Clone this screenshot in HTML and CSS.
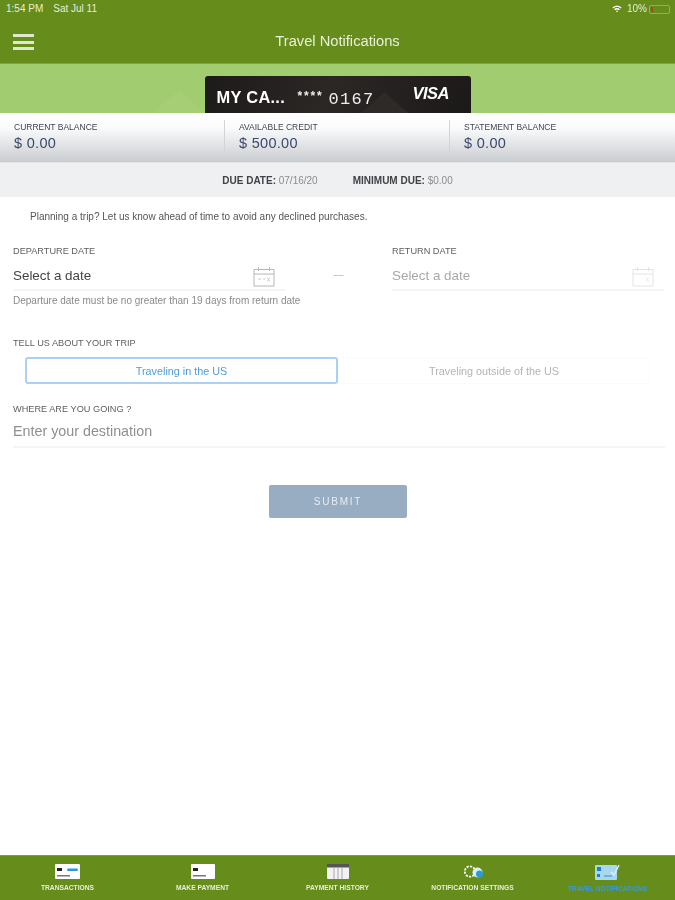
FILE: index.html
```html
<!DOCTYPE html>
<html lang="en">
<head>
<meta charset="utf-8">
<title>Travel Notifications</title>
<link rel="stylesheet" href="styles.css">
</head>
<body>
<div class="app">
  <header class="header">
    <div class="status">
      <div class="status-left"><span>1:54 PM</span><span>Sat Jul 11</span></div>
      <div class="status-right">
        <svg class="wifi" width="10" height="8" viewBox="0 0 12 9"><path d="M0.5 2.6C3.6-0.2 8.4-0.2 11.5 2.6L10.3 3.8C7.9 1.7 4.1 1.7 1.7 3.8Z M2.6 4.7C4.5 3 7.5 3 9.4 4.7L8.2 5.9C7 4.9 5 4.9 3.8 5.9Z M4.7 6.9C5.4 6.3 6.6 6.3 7.3 6.9L6 8.4Z" fill="#fff"/></svg>
        <span>10%</span>
        <span class="battery"><span class="battery-level"></span></span>
      </div>
    </div>
    <div class="nav">
      <div class="burger"><span></span><span></span><span></span></div>
      <div class="nav-title">Travel Notifications</div>
    </div>
  </header>

  <section class="band">
    <div class="card">
      <span class="card-name">MY CA...</span>
      <span class="card-stars">****</span>
      <span class="card-num">0167</span>
      <span class="card-visa">VISA</span>
    </div>
  </section>

  <section class="balances">
    <div class="balance">
      <div class="balance-label">CURRENT BALANCE</div>
      <div class="balance-value">$ 0.00</div>
    </div>
    <div class="balance">
      <div class="balance-label">AVAILABLE CREDIT</div>
      <div class="balance-value">$ 500.00</div>
    </div>
    <div class="balance">
      <div class="balance-label">STATEMENT BALANCE</div>
      <div class="balance-value">$ 0.00</div>
    </div>
  </section>

  <section class="due">
    <div><b>DUE DATE:</b> 07/16/20</div>
    <div><b>MINIMUM DUE:</b> $0.00</div>
  </section>

  <main class="content">
    <p class="intro">Planning a trip? Let us know ahead of time to avoid any declined purchases.</p>

    <div class="dates">
      <div class="date-col">
        <div class="label">DEPARTURE DATE</div>
        <div class="field date-field">
          <span class="value">Select a date</span>
          <svg class="cal" width="22" height="21" viewBox="0 0 22 21"><path d="M1 3.5H21V20H1Z M1 8H21 M5.5 1V5 M16.5 1V5" fill="none" stroke="#b4b8b8"/><path d="M5 13H8 M10 13H12 M14 11.5L17 15.5 M17 11.5L14 15.5" fill="none" stroke="#c8cccc"/></svg>
        </div>
        <div class="hint">Departure date must be no greater than 19 days from return date</div>
      </div>
      <div class="date-sep">&ndash;&ndash;</div>
      <div class="date-col">
        <div class="label">RETURN DATE</div>
        <div class="field date-field">
          <span class="value muted">Select a date</span>
          <svg class="cal" width="22" height="21" viewBox="0 0 22 21"><path d="M1 3.5H21V20H1Z M1 8H21 M5.5 1V5 M16.5 1V5" fill="none" stroke="#e2e4e4"/><path d="M14 11.5L17 15.5 M17 11.5L14 15.5" fill="none" stroke="#e6e8e8"/></svg>
        </div>
      </div>
    </div>

    <div class="label trip-label">TELL US ABOUT YOUR TRIP</div>
    <div class="toggle">
      <div class="toggle-btn active">Traveling in the US</div>
      <div class="toggle-btn">Traveling outside of the US</div>
    </div>

    <div class="label where-label">WHERE ARE YOU GOING ?</div>
    <div class="field dest-field"><span class="value placeholder">Enter your destination</span></div>

    <div class="submit-row"><div class="submit">SUBMIT</div></div>
  </main>

  <nav class="tabs">
    <div class="tab">
      <svg width="25" height="16" viewBox="0 0 25 16"><rect width="25" height="15" rx="1" fill="#fff"/><rect x="2" y="4" width="5" height="3" fill="#222"/><rect x="12" y="4.500" width="11" height="2.500" rx="1.200" fill="#2a9ad8"/><rect x="2" y="11" width="13" height="1.500" fill="#777"/></svg>
      <span>TRANSACTIONS</span>
    </div>
    <div class="tab">
      <svg width="24" height="16" viewBox="0 0 24 16"><rect width="24" height="15" rx="1" fill="#fff"/><rect x="2" y="4" width="5" height="3" fill="#222"/><rect x="2" y="11" width="13" height="1.500" fill="#777"/></svg>
      <span>MAKE PAYMENT</span>
    </div>
    <div class="tab">
      <svg width="22" height="16" viewBox="0 0 22 16"><rect width="22" height="15" rx="1" fill="#f2f2f2"/><rect width="22" height="3.500" fill="#555"/><path d="M7 3.500V15 M11 3.500V15 M15 3.500V15" stroke="#a8a8a8"/></svg>
      <span>PAYMENT HISTORY</span>
    </div>
    <div class="tab">
      <svg width="22" height="16" viewBox="0 0 22 16"><circle cx="8" cy="7.500" r="5.200" fill="none" stroke="#fff" stroke-width="1.800" stroke-dasharray="2.200 1.200"/><circle cx="15.500" cy="8.500" r="5" fill="#d8eef8"/><circle cx="17.500" cy="10" r="3.500" fill="#2a9ad8"/></svg>
      <span>NOTIFICATION SETTINGS</span>
    </div>
    <div class="tab tab-active">
      <svg width="25" height="17" viewBox="0 0 25 17"><rect y="1" width="22" height="15" rx="1" fill="#a8d8f0"/><rect x="2" y="3" width="4" height="4" fill="#1e7fc8"/><rect x="2" y="10" width="3" height="3" fill="#1e7fc8"/><path d="M9 12H17" stroke="#3a8fc8"/><path d="M16 8L19 11L24 1" fill="none" stroke="#d8eef8" stroke-width="1.600"/></svg>
      <span>TRAVEL NOTIFICATIONS</span>
    </div>
  </nav>
</div>
</body>
</html>
```
FILE: styles.css
```css
* { box-sizing: border-box; }
html, body { margin: 0; padding: 0; }
body { font-family: "Liberation Sans", Arial, sans-serif; background: #fff; color: #333; }
.app { width: 675px; height: 900px; display: flex; flex-direction: column; overflow: hidden; filter: blur(0.4px); }

.header { height: 64px; background: #668c1b; color: #fff; border-bottom: 1px solid #7fa33a; flex: none; }
.status { height: 19px; padding: 3px 5px 0 6px; display: flex; justify-content: space-between; align-items: flex-start; font-size: 10px; line-height: 12px; color: #e6eed8; }
.status-left { display: flex; gap: 10px; }
.status-right { display: flex; align-items: center; gap: 2px; }
.wifi { margin-right: 3px; }
.battery { width: 21px; height: 9px; border: 1px solid #94ad63; border-radius: 2px; display: block; padding: 1px; }
.battery-level { display: block; width: 2px; height: 100%; background: #c0392b; }
.nav { height: 44px; position: relative; display: flex; align-items: center; justify-content: center; }
.burger { position: absolute; left: 13px; top: 15px; width: 21px; display: flex; flex-direction: column; gap: 3.500px; }
.burger span { display: block; height: 3px; background: #dfe8cf; }
.nav-title { font-size: 14.700px; color: #e8efdc; }

.band { height: 49px; flex: none; background: #a2cc70; padding-top: 12px; display: flex; justify-content: center; overflow: hidden; position: relative; }
.band::before { content: ""; position: absolute; left: 153px; top: 26px; width: 52px; height: 23px; background: #a6cf75; clip-path: polygon(50% 0, 100% 100%, 0 100%); }
.card { width: 266px; height: 60px; background: linear-gradient(110deg, #1d1a1a 0%, #2b2725 45%, #1b1818 100%); border-radius: 3px 3px 0 0; color: #fff; position: relative; flex: none; overflow: hidden; }
.card::after { content: ""; position: absolute; left: 155px; top: 16px; width: 50px; height: 22px; background: #2e2a28; clip-path: polygon(50% 0, 100% 100%, 0 100%); }
.card-name { position: absolute; left: 12px; top: 12px; font-size: 16.400px; font-weight: 700; letter-spacing: 0.300px; z-index: 1; }
.card-stars { position: absolute; left: 93px; top: 13px; font-size: 12px; font-weight: 700; color: #eee; letter-spacing: 1.800px; z-index: 1; }
.card-num { position: absolute; left: 124px; top: 14px; font-family: "Liberation Mono", monospace; font-size: 17px; color: #eee; letter-spacing: 1.300px; z-index: 1; }
.card-visa { position: absolute; left: 208px; top: 8px; font-size: 16.500px; font-weight: 700; font-style: italic; letter-spacing: -0.500px; z-index: 1; }

.balances { height: 50px; flex: none; display: grid; grid-template-columns: 224px 225px 226px; padding-top: 7px; background: linear-gradient(#fff 0%, #fbfbfc 30%, #c9ccd0 100%); border-bottom: 1px solid #e2e4e6; }
.balance { padding-left: 14px; height: 36px; border-left: 1px solid #d2d4d7; }
.balance:first-child { border-left: 0; }
.balance-label { font-size: 8.500px; color: #3d4450; line-height: 11px; margin-top: 2px; }
.balance-value { font-size: 14.500px; color: #3a4a6b; line-height: 18px; margin-top: 1px; letter-spacing: 0.300px; }

.due { height: 34px; flex: none; background: #eef0f2; display: flex; justify-content: center; align-items: center; gap: 35px; font-size: 10px; color: #8a8d90; }
.due b { color: #3f4246; font-weight: 700; }

.content { flex: 1; padding: 0 10px 0 13px; display: flex; flex-direction: column; }
.intro { margin: 14px 0 0 17px; font-size: 10px; line-height: 12px; color: #555; }

.dates { display: grid; grid-template-columns: 272px 107px 272px; margin-top: 23px; }
.date-col { display: flex; flex-direction: column; }
.label { font-size: 9.200px; line-height: 11px; color: #5c5f62; }
.field { border-bottom: 2px solid #f5f5f5; display: flex; align-items: center; }
.date-field { height: 32px; margin-top: 2px; justify-content: space-between; padding: 3px 10px 0 0; }
.value { font-size: 13.400px; color: #444; }
.muted { color: #a8a8a8; }
.placeholder { color: #8f8f8f; font-size: 14.300px; }
.cal { margin-top: 2px; }
.hint { margin-top: 4px; font-size: 10px; line-height: 12px; color: #8a8a8a; white-space: nowrap; }
.date-sep { text-align: center; font-size: 9px; color: #aaa; padding-top: 24px; }

.trip-label { margin-top: 31px; }
.toggle { display: grid; grid-template-columns: 313px 312px; margin: 8px 0 0 12px; }
.toggle-btn { height: 27px; display: flex; align-items: center; justify-content: center; font-size: 10.800px; color: #b4b4b4; border-radius: 3px; border: 1px solid #fbfbfb; }
.toggle-btn.active { color: #4f9bdc; border: 2px solid #acd0f2; }
.where-label { margin-top: 20px; }
.dest-field { height: 30px; margin-top: 3px; width: 652px; padding-bottom: 3px; }
.submit-row { display: flex; justify-content: center; margin-top: 37px; padding-right: 2px; }
.submit { width: 138px; height: 33px; background: #98adc2; border-radius: 2px; color: #e4ecf4; font-size: 10px; letter-spacing: 1.800px; display: flex; align-items: center; justify-content: center; }

.tabs { height: 45px; flex: none; background: #668c1b; border-top: 1px solid #7d9f38; display: grid; grid-template-columns: repeat(5, 135px); padding-top: 8px; }
.tab { display: flex; flex-direction: column; align-items: center; gap: 4px; font-size: 6.700px; font-weight: 700; color: #e6efd8; white-space: nowrap; }
.tab svg { flex: none; }
.tab-active { color: #3d9ad0; }
```
